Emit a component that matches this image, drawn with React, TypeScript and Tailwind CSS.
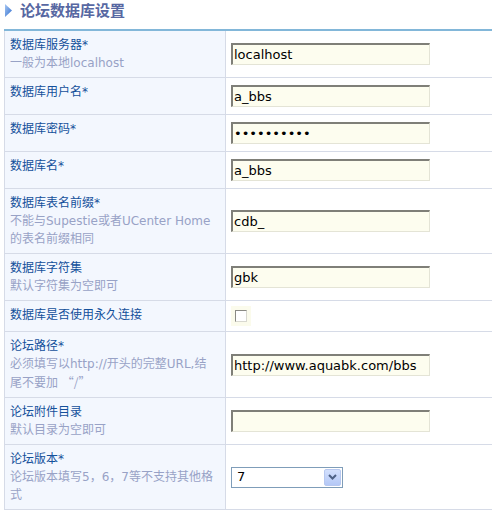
import React from "react";

const font = { fontFamily: '"DejaVu Sans", "Noto Sans CJK SC", sans-serif' };
const cjk = { fontFamily: '"Noto Sans CJK SC", sans-serif' };

type Row = {
  label: string;
  hint?: React.ReactNode[];
  kind: "text" | "password" | "check" | "select";
  value?: string;
};

const rows: Row[] = [
  { label: "数据库服务器*", hint: ["一般为本地localhost"], kind: "text", value: "localhost" },
  { label: "数据库用户名*", kind: "text", value: "a_bbs" },
  { label: "数据库密码*", kind: "password", value: "aquabk1234" },
  { label: "数据库名*", kind: "text", value: "a_bbs" },
  {
    label: "数据库表名前缀*",
    hint: ["不能与Supestie或者UCenter Home", "的表名前缀相同"],
    kind: "text",
    value: "cdb_",
  },
  { label: "数据库字符集", hint: ["默认字符集为空即可"], kind: "text", value: "gbk" },
  { label: "数据库是否使用永久连接", kind: "check" },
  {
    label: "论坛路径*",
    hint: [
      "必须填写以http://开头的完整URL,结",
      <>
        尾不要加 <span style={cjk}>“/”</span>
      </>,
    ],
    kind: "text",
    value: "http://www.aquabk.com/bbs",
  },
  { label: "论坛附件目录", hint: ["默认目录为空即可"], kind: "text", value: "" },
  {
    label: "论坛版本*",
    hint: ["论坛版本填写5，6，7等不支持其他格", "式"],
    kind: "select",
    value: "7",
  },
];

function Field({ row }: { row: Row }) {
  const inputCls =
    "my-[2px] h-[22px] w-[199px] border-t-2 border-l-2 border-r border-b border-t-[#7f7f78] border-l-[#7f7f78] border-r-[#e4e4d6] border-b-[#e4e4d6] bg-[#fdfdef] px-[1px] text-[13px] text-black outline-none";

  if (row.kind === "check") {
    return (
      <div className="flex h-[20px] w-[20px] items-center justify-center bg-[#fbfbec]">
        <span className="block h-[12px] w-[12px] border border-t-[#8a8a84] border-l-[#8a8a84] border-r-[#d8d8d0] border-b-[#d8d8d0] bg-white" />
      </div>
    );
  }

  if (row.kind === "select") {
    return (
      <div className="flex h-[21px] w-[112px] items-center border border-[#7f9db9] bg-white">
        <span className="flex-1 pl-[5px] text-[13px] text-black">{row.value}</span>
        <span className="mr-[1px] flex h-[17px] w-[17px] items-center justify-center rounded-[2px] border border-[#b7c8f0] bg-gradient-to-b from-[#d3e0fd] to-[#b4c8f6]">
          <svg width="9" height="6" viewBox="0 0 9 6">
            <path d="M1 1 L4.5 4.5 L8 1" fill="none" stroke="#4d6185" strokeWidth="2" />
          </svg>
        </span>
      </div>
    );
  }

  return (
    <input
      type={row.kind === "password" ? "password" : "text"}
      defaultValue={row.value}
      readOnly
      className={inputCls}
      style={font}
    />
  );
}

export default function App() {
  return (
    <div className="min-h-[516px] w-[492px] overflow-hidden bg-white" style={font}>
      {/* heading */}
      <div className="flex h-[29px] items-start gap-[8px] pl-[5px] pt-[3px]">
        <svg width="7" height="13" viewBox="0 0 7 13" className="mt-[1px]">
          <defs>
            <linearGradient id="tri" x1="0" y1="0" x2="1" y2="1">
              <stop offset="0" stopColor="#a9c8f2" />
              <stop offset="1" stopColor="#2f6ed0" />
            </linearGradient>
          </defs>
          <path d="M0 0 L7 6.5 L0 13 Z" fill="url(#tri)" />
        </svg>
        <span className="text-[15px] font-bold leading-[17px] text-[#5767a2]">论坛数据库设置</span>
      </div>

      {/* table */}
      <div className="ml-[4px] border-t-2 border-[#82b7d9]">
        {rows.map((row) => (
          <div key={row.label} className="flex border-b border-[#d6dbe7]">
            <div className="w-[222px] shrink-0 border-l border-r border-[#d6dbe7] bg-[#f3f7fe] px-[5px] py-[5px] text-[12px] leading-[18px]">
              <div className="text-[#14509b]">{row.label}</div>
              {row.hint?.map((h, i) => (
                <div key={i} className="text-[#98a2c6]">
                  {h}
                </div>
              ))}
            </div>
            <div className="flex flex-1 items-center py-[5px] pl-[5px]">
              <Field row={row} />
            </div>
          </div>
        ))}
      </div>
    </div>
  );
}
